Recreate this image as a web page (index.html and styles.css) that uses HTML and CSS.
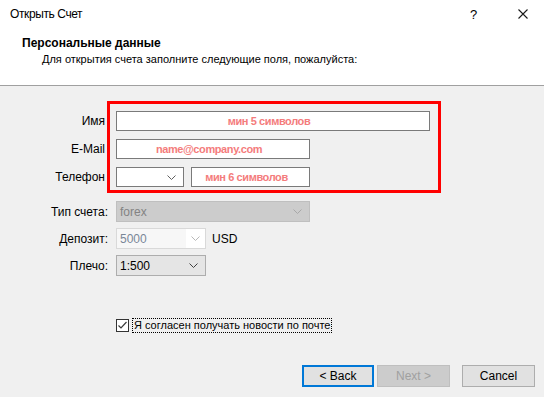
FILE: index.html
```html
<!DOCTYPE html>
<html lang="ru">
<head>
    <meta charset="UTF-8">
    <title>Открыть Счет</title>
    <link rel="stylesheet" href="styles.css">
</head>
<body>
    <div class="window">
        <!-- Header -->
        <header class="head">
            <div class="titlebar">
                <span class="title">Открыть Счет</span>
                <span class="help">?</span>
                <span class="close">
                    <svg width="10" height="10" viewBox="0 0 10 10"><path d="M0.5 0.5 L9.5 9.5 M9.5 0.5 L0.5 9.5" stroke="#1a1a1a" stroke-width="1.1" fill="none"/></svg>
                </span>
            </div>
            <div class="section-title">Персональные данные</div>
            <div class="section-sub">Для открытия счета заполните следующие поля, пожалуйста:</div>
        </header>

        <!-- Form -->
        <main class="body">
            <div class="group personal">
                <div class="highlight"></div>
                <div class="row">
                    <label>Имя</label>
                    <div class="field name hint">мин 5 символов</div>
                </div>
                <div class="row">
                    <label>E-Mail</label>
                    <div class="field email hint">name@company.com</div>
                </div>
                <div class="row">
                    <label>Телефон</label>
                    <div class="field code">
                        <svg class="chev" width="9" height="5" viewBox="0 0 9 5"><polyline points="0.5,0.5 4.5,4.5 8.5,0.5" stroke="#606060" fill="none"/></svg>
                    </div>
                    <div class="field phone hint">мин 6 символов</div>
                </div>
            </div>

            <div class="group account">
                <div class="row">
                    <label>Тип счета:</label>
                    <div class="select disabled type">
                        <span>forex</span>
                        <svg class="chev" width="9" height="5" viewBox="0 0 9 5"><polyline points="0.5,0.5 4.5,4.5 8.5,0.5" stroke="#a8a8a8" fill="none"/></svg>
                    </div>
                </div>
                <div class="row">
                    <label>Депозит:</label>
                    <div class="select deposit">
                        <span class="val">5000</span>
                        <span class="arrow"><svg class="chev" width="9" height="5" viewBox="0 0 9 5"><polyline points="0.5,0.5 4.5,4.5 8.5,0.5" stroke="#b8b8b8" fill="none"/></svg></span>
                    </div>
                    <span class="unit">USD</span>
                </div>
                <div class="row">
                    <label>Плечо:</label>
                    <div class="select leverage">
                        <span>1:500</span>
                        <svg class="chev" width="9" height="5" viewBox="0 0 9 5"><polyline points="0.5,0.5 4.5,4.5 8.5,0.5" stroke="#404040" fill="none"/></svg>
                    </div>
                </div>
            </div>

            <div class="agree">
                <span class="checkbox">
                    <svg width="11" height="11" viewBox="0 0 11 11"><polyline points="1.5,5.5 4,8 9.5,2" stroke="#3a3a3a" stroke-width="1.2" fill="none"/></svg>
                </span>
                <span class="agree-text">Я согласен получать новости по почте</span>
            </div>

            <div class="buttons">
                <button type="button" class="btn default">&lt; Back</button>
                <button type="button" class="btn disabled">Next &gt;</button>
                <button type="button" class="btn cancel">Cancel</button>
            </div>
        </main>
    </div>
</body>
</html>
```

FILE: styles.css
```css
body {
    margin: 0;
    padding: 0;
    font-family: 'Liberation Sans', Arial, sans-serif;
    font-size: 11px;
    color: #000;
    background-color: #f0f0f0;
}

.window {
    width: 544px;
    height: 397px;
    display: flex;
    flex-direction: column;
}

/* Header */
.head {
    background-color: #fff;
    height: 85px;
    border-bottom: 1px solid #a0a0a0;
}

.titlebar {
    display: flex;
    align-items: center;
    height: 28px;
    padding-left: 10px;
}

.title {
    flex: 1;
    font-size: 12px;
    letter-spacing: -0.4px;
}

.help {
    width: 10px;
    margin-right: 38px;
    font-size: 13px;
}

.close {
    display: flex;
    margin-right: 16px;
}

.section-title {
    font-weight: bold;
    font-size: 12px;
    margin: 8px 0 0 22px;
}

.section-sub {
    margin: 3px 0 0 42px;
}

/* Body */
.body {
    flex: 1;
    display: flex;
    flex-direction: column;
}

.group {
    display: flex;
    flex-direction: column;
}

.personal {
    position: relative;
    margin-top: 25px;
    gap: 8px;
}

/* red annotation frame drawn over the fields */
.highlight {
    position: absolute;
    left: 107px;
    top: -10px;
    width: 328px;
    height: 86px;
    border: 3px solid #ff0000;
}

.row {
    display: flex;
    align-items: center;
}

.row label {
    width: 105px;
    margin-right: 11px;
    text-align: right;
    font-size: 12px;
}

.account .row label {
    width: 108px;
    margin-right: 8px;
}

.field {
    height: 18px;
    background-color: #fff;
    border: 1px solid #7a7a7a;
    display: flex;
    align-items: center;
    justify-content: center;
}

.hint {
    box-sizing: border-box;
    height: 20px;
    padding-right: 8px;
    color: #f47c7c;
    font-weight: bold;
    font-size: 11px;
    letter-spacing: -0.4px;
}

.name {
    width: 314px;
}

.email {
    width: 194px;
}

.code {
    width: 66px;
    justify-content: flex-end;
}

.code .chev {
    margin-right: 7px;
}

.phone {
    width: 119px;
    margin-left: 7px;
}

/* Account settings */
.account {
    margin-top: 14px;
    gap: 6px;
}

.select {
    height: 19px;
    display: flex;
    align-items: center;
    border: 1px solid #adadad;
    font-size: 12px;
}

.select span {
    flex: 1;
    padding-left: 3px;
}

.select .chev {
    margin-right: 7px;
}

.select.disabled {
    width: 192px;
    background-color: #cccccc;
    border-color: #bfbfbf;
    color: #838383;
}

.deposit {
    width: 88px;
    background-color: #fff;
    border-color: #d9d9d9;
}

.deposit .val {
    color: #7a8797;
    background-color: #f7f7f7;
    align-self: stretch;
    display: flex;
    align-items: center;
}

.deposit .arrow {
    flex: 0 0 19px;
    padding: 0;
    display: flex;
    justify-content: center;
}

.deposit .arrow .chev {
    margin: 0;
}

.unit {
    margin-left: 6px;
    font-size: 12px;
}

.leverage {
    width: 88px;
    background-color: #e5e5e5;
}

/* Checkbox */
.agree {
    display: flex;
    align-items: center;
    margin: 42px 0 0 116px;
}

.checkbox {
    width: 11px;
    height: 11px;
    border: 1px solid #333;
    background-color: #fff;
    display: flex;
}

.agree-text {
    margin-left: 3px;
    padding: 0 1px;
    border: 1px dotted #000;
    line-height: 13px;
    font-size: 11px;
}

/* Buttons */
.buttons {
    display: flex;
    margin: 32px 0 0 302px;
}

.btn {
    font-family: 'Liberation Sans', Arial, sans-serif;
    font-size: 12px;
    height: 22px;
    width: 73px;
    padding: 0;
    background-color: #e1e1e1;
    border: 1px solid #adadad;
    color: #000;
}

.btn.default {
    border: 2px solid #0078d7;
    width: 72px;
}

.btn.disabled {
    margin-left: 3px;
    background-color: #cccccc;
    border-color: #bfbfbf;
    color: #a0a0a0;
}

.btn.cancel {
    margin-left: 12px;
}
```
